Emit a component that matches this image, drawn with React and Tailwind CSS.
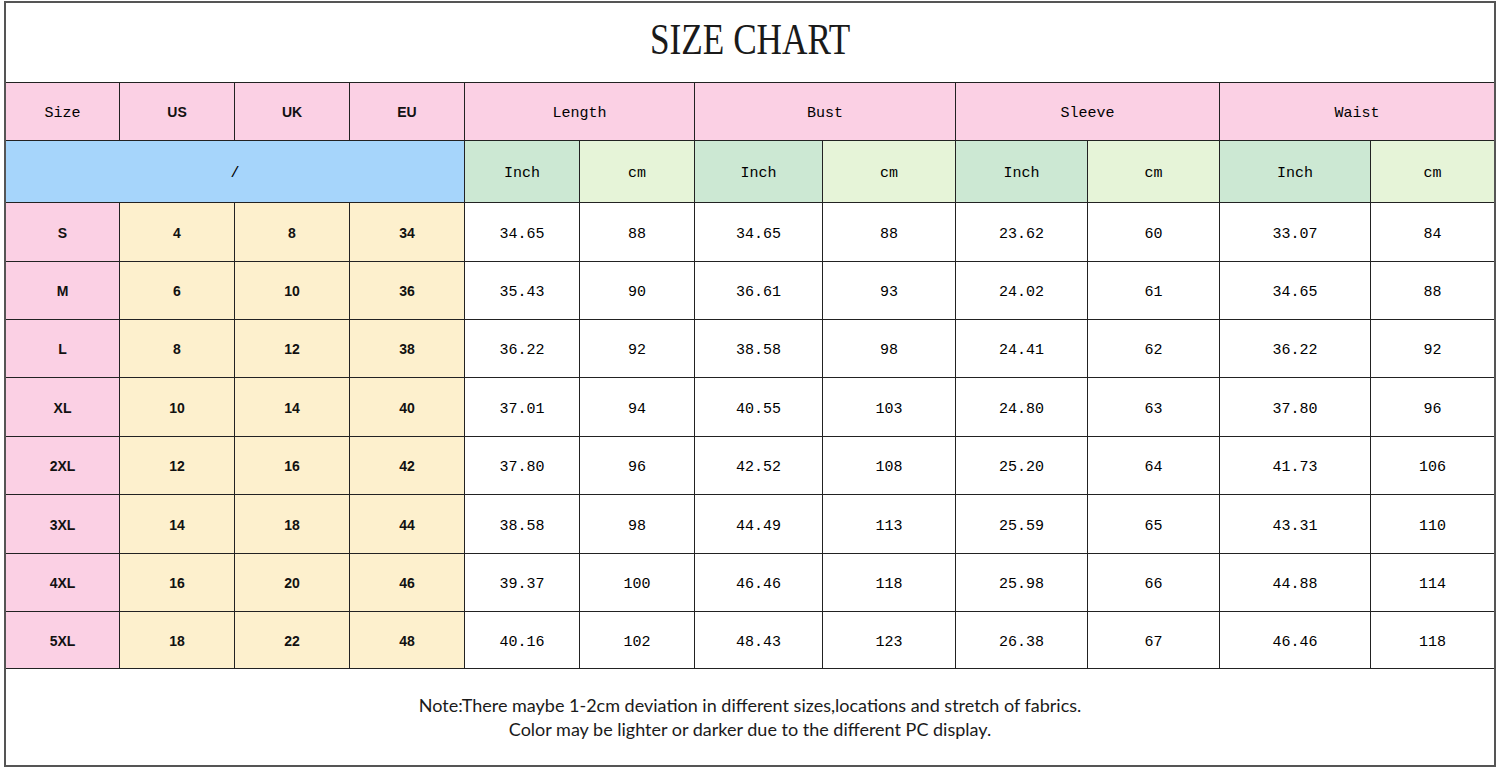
import React from "react";

const COLS = "grid-cols-[114px_115px_115px_115px_115px_115px_128px_133px_132px_132px_151px_123px]";

const ROWS = [
  ["S", "4", "8", "34", "34.65", "88", "34.65", "88", "23.62", "60", "33.07", "84"],
  ["M", "6", "10", "36", "35.43", "90", "36.61", "93", "24.02", "61", "34.65", "88"],
  ["L", "8", "12", "38", "36.22", "92", "38.58", "98", "24.41", "62", "36.22", "92"],
  ["XL", "10", "14", "40", "37.01", "94", "40.55", "103", "24.80", "63", "37.80", "96"],
  ["2XL", "12", "16", "42", "37.80", "96", "42.52", "108", "25.20", "64", "41.73", "106"],
  ["3XL", "14", "18", "44", "38.58", "98", "44.49", "113", "25.59", "65", "43.31", "110"],
  ["4XL", "16", "20", "46", "39.37", "100", "46.46", "118", "25.98", "66", "44.88", "114"],
  ["5XL", "18", "22", "48", "40.16", "102", "48.43", "123", "26.38", "67", "46.46", "118"],
];

const ROW_H = ["h-[59px]", "h-[58px]", "h-[58px]", "h-[59px]", "h-[58px]", "h-[59px]", "h-[58px]", "h-[57px]"];

const mono = "font-['Liberation_Mono',monospace] text-[15px] text-black pt-[6px]";
const bold = "font-['Liberation_Sans',Arial,sans-serif] text-[14px] font-bold text-[#111] pt-[2px]";

function Cell({ className = "", last = false, children }) {
  return (
    <div
      className={`flex items-center justify-center border-b border-[#222] ${
        last ? "" : "border-r"
      } ${className}`}
    >
      {children}
    </div>
  );
}

export default function App() {
  return (
    <div className="w-[1500px] h-[768px] bg-white pt-[1px] pl-[4px]">
      <div className="w-[1492px] h-[766px] border-2 border-[#555] flex flex-col">
        <div className="h-[80px] flex items-center justify-center border-b border-[#222]">
          <span className="inline-block scale-x-80 font-['Liberation_Serif',serif] text-[44px] leading-none text-[#1a1a1a] pb-[6px]">
            SIZE CHART
          </span>
        </div>

        <div className={`grid ${COLS}`}>
          {/* header */}
          <Cell className={`h-[58px] bg-[#fbd0e4] ${mono}`}>Size</Cell>
          <Cell className={`h-[58px] bg-[#fbd0e4] ${bold}`}>US</Cell>
          <Cell className={`h-[58px] bg-[#fbd0e4] ${bold}`}>UK</Cell>
          <Cell className={`h-[58px] bg-[#fbd0e4] ${bold}`}>EU</Cell>
          <Cell className={`col-span-2 h-[58px] bg-[#fbd0e4] ${mono}`}>Length</Cell>
          <Cell className={`col-span-2 h-[58px] bg-[#fbd0e4] ${mono}`}>Bust</Cell>
          <Cell className={`col-span-2 h-[58px] bg-[#fbd0e4] ${mono}`}>Sleeve</Cell>
          <Cell last className={`col-span-2 h-[58px] bg-[#fbd0e4] ${mono}`}>Waist</Cell>

          {/* units */}
          <Cell className={`col-span-4 h-[62px] bg-[#a6d5fb] ${mono}`}>/</Cell>
          {[0, 1, 2, 3].map((i) => (
            <React.Fragment key={i}>
              <Cell className={`h-[62px] bg-[#cce8d3] ${mono}`}>Inch</Cell>
              <Cell last={i === 3} className={`h-[62px] bg-[#e6f4d8] ${mono}`}>cm</Cell>
            </React.Fragment>
          ))}

          {/* data */}
          {ROWS.map((row, r) =>
            row.map((v, c) => (
              <Cell
                key={`${r}-${c}`}
                last={c === 11}
                className={`${ROW_H[r]} ${
                  c === 0 ? `bg-[#fbd0e4] ${bold}` : c < 4 ? `bg-[#fdf0cd] ${bold}` : `bg-white ${mono}`
                }`}
              >
                {v}
              </Cell>
            ))
          )}
        </div>

        <div className="flex-1 flex flex-col items-center justify-center font-['Lato',sans-serif] text-[18px] leading-[24px] text-[#1a1a1a]">
          <p>Note:There maybe 1-2cm deviation in different sizes,locations and stretch of fabrics.</p>
          <p>Color may be lighter or darker due to the different PC display.</p>
        </div>
      </div>
    </div>
  );
}
